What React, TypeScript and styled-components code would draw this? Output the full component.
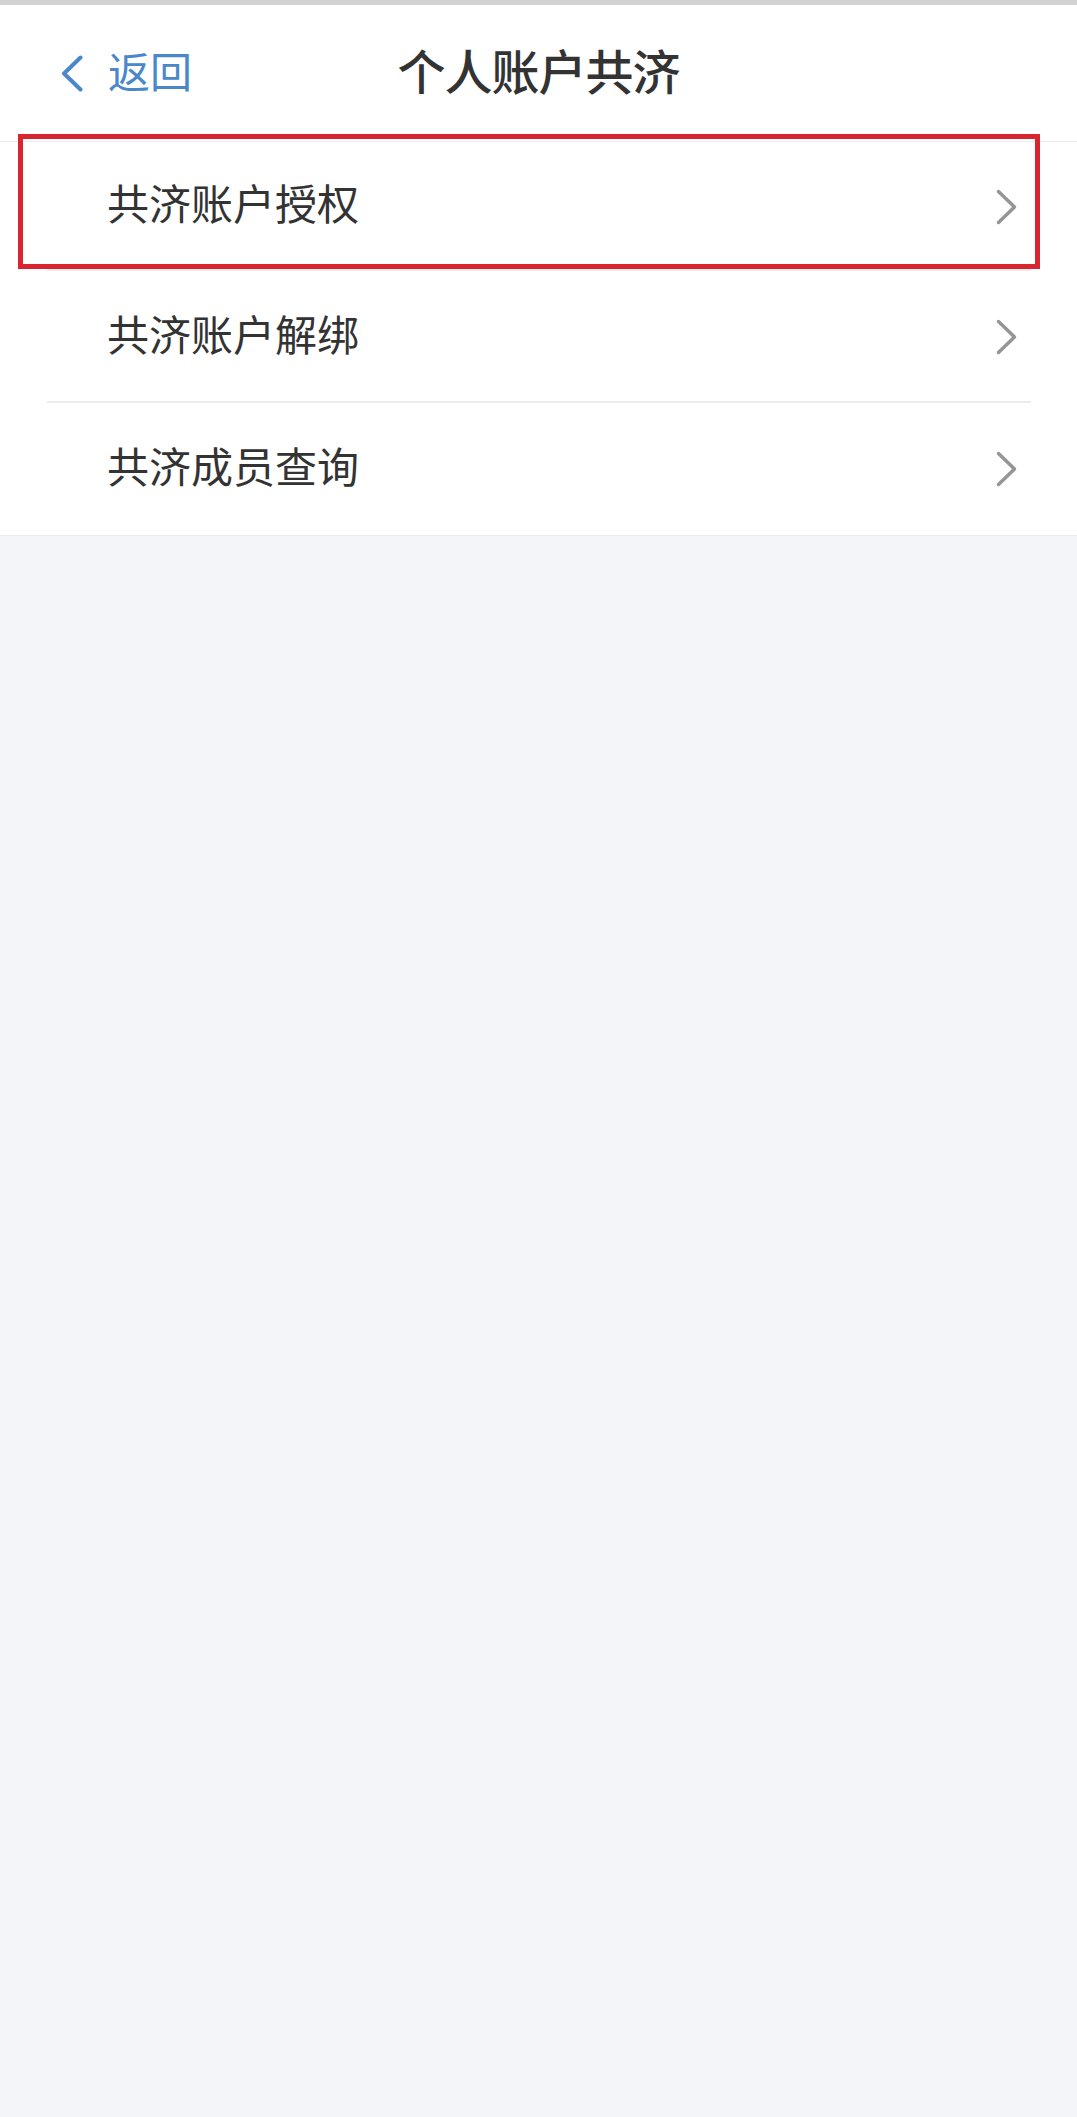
import React from "react";
import styled, { createGlobalStyle } from "styled-components";

const GlobalStyle = createGlobalStyle`
  html, body {
    margin: 0;
    padding: 0;
    background: #f4f5f9;
  }
  body {
    font-family: "Noto Sans CJK SC", "Noto Sans", sans-serif;
  }
`;

const Page = styled.div`
  min-height: 2117px;
  background: #f4f5f9;
  display: flex;
  flex-direction: column;
`;

const StatusStrip = styled.div`
  height: 5px;
  background: #d3d3d3;
`;

const Header = styled.header`
  height: 136px;
  background: #ffffff;
  border-bottom: 1px solid #ececec;
  display: grid;
  grid-template-columns: 1fr auto 1fr;
  align-items: center;
`;

const BackButton = styled.button`
  justify-self: start;
  display: flex;
  align-items: center;
  gap: 25px;
  padding: 0 0 0 61px;
  margin: 0;
  border: none;
  background: none;
  color: #4a87cb;
  font-family: "Noto Sans CJK SC", sans-serif;
  font-size: 42px;
  line-height: 1;
  cursor: pointer;
`;

const BackText = styled.span`
  padding-bottom: 6px;
`;

const Title = styled.h1`
  margin: 0;
  padding-bottom: 8px;
  font-family: "Noto Sans CJK SC", sans-serif;
  font-size: 48px;
  font-weight: 500;
  color: #333333;
  line-height: 1;
  letter-spacing: -1px;
`;

const List = styled.ul`
  list-style: none;
  margin: 0;
  padding: 0;
  background: #ffffff;
  border-bottom: 1px solid #ececec;
`;

const Row = styled.li`
  position: relative;
  height: 132px;
  display: flex;
  align-items: center;
  justify-content: space-between;
  padding: 0 60px 0 107px;
  &:first-child {
    height: 129px;
  }
  &:not(:last-child)::after {
    content: "";
    position: absolute;
    left: 47px;
    right: 46px;
    bottom: 0;
    height: 2px;
    background: #ececec;
  }
`;

const RowLabel = styled.span`
  padding-bottom: 9px;
  font-family: "Noto Sans CJK SC", sans-serif;
  font-size: 42px;
  color: #333333;
  line-height: 1;
`;

const Highlight = styled.div`
  position: absolute;
  left: 18px;
  right: 37px;
  top: -8px;
  bottom: 2px;
  border: 5px solid #d9252f;
  pointer-events: none;
`;

const BackChevron = () => (
  <svg width="22" height="37" viewBox="0 0 22 37" fill="none">
    <polyline
      points="19.5,2.5 3,18.5 19.5,34.5"
      stroke="#4a87cb"
      strokeWidth="4"
      strokeLinecap="round"
      strokeLinejoin="round"
    />
  </svg>
);

const RowChevron = () => (
  <svg width="21" height="36" viewBox="0 0 21 36" fill="none">
    <polyline
      points="2.5,2.5 18.5,18 2.5,33.5"
      stroke="#959595"
      strokeWidth="3.5"
      strokeLinecap="round"
      strokeLinejoin="round"
    />
  </svg>
);

const items = ["共济账户授权", "共济账户解绑", "共济成员查询"];

export default function App() {
  return (
    <>
      <GlobalStyle />
      <Page>
        <StatusStrip />
        <Header>
          <BackButton>
            <BackChevron />
            <BackText>返回</BackText>
          </BackButton>
          <Title>个人账户共济</Title>
          <div />
        </Header>
        <List>
          {items.map((label, i) => (
            <Row key={label}>
              <RowLabel>{label}</RowLabel>
              <RowChevron />
              {i === 0 && <Highlight />}
            </Row>
          ))}
        </List>
      </Page>
    </>
  );
}
